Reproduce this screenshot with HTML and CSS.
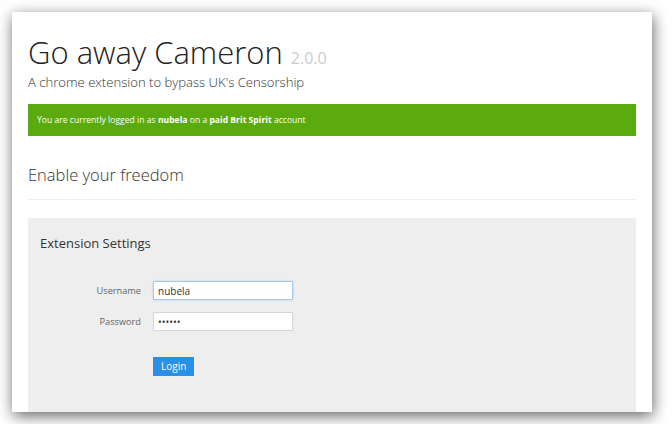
FILE: index.html
```html
<!DOCTYPE html>
<html lang="en">
<head>
    <meta charset="UTF-8">
    <title>Go away Cameron</title>
    <link rel="stylesheet" href="styles.css">
</head>
<body>
    <div class="window">
        <div class="page">
            <div class="head">
                <h1>Go away Cameron <small>2.0.0</small></h1>
                <p class="lead">A chrome extension to bypass UK's Censorship</p>
            </div>
            <div class="alert">You are currently logged in as <b>nubela</b> on a <b>paid Brit Spirit</b> account</div>
            <h2 class="section">Enable your freedom</h2>
            <div class="panel">
                <h3>Extension Settings</h3>
                <form class="form">
                    <label for="user">Username</label>
                    <input id="user" class="focus" type="text" value="nubela">
                    <label for="pass">Password</label>
                    <input id="pass" type="password" value="secret">
                    <span></span>
                    <div class="actions">
                        <button type="button" class="btn">Login</button>
                    </div>
                </form>
            </div>
        </div>
    </div>
</body>
</html>
```

FILE: styles.css
```css
* {
    margin: 0;
    padding: 0;
    box-sizing: border-box;
}

body {
    padding: 12px;
    background: #fff;
    font-family: "Open Sans", "Liberation Sans", sans-serif;
    color: #333;
}

.window {
    width: 640px;
    height: 400px;
    overflow: hidden;
    background: #fff;
    box-shadow: 1px 4px 14px rgba(0, 0, 0, .6);
}

.page {
    padding: 26px 16px 0;
}

h1 {
    font-size: 31px;
    line-height: 28px;
    font-weight: 300;
    color: #222;
}

h1 small {
    font-size: 16px;
    font-weight: 400;
    color: #ccc;
}

.lead {
    margin-top: 1px;
    font-size: 13.1px;
    line-height: 18px;
    font-weight: 300;
    color: #333;
}

.alert {
    margin-top: 13px;
    height: 32px;
    padding-left: 9px;
    background: #5baa0e;
    color: #fff;
    font-size: 8.6px;
    line-height: 32px;
}

.alert b {
    font-weight: 700;
}

.section {
    margin-top: 28px;
    padding-bottom: 13px;
    border-bottom: 1px solid #eee;
    font-size: 16.5px;
    line-height: 22px;
    font-weight: 300;
    color: #333;
}

.panel {
    margin-top: 18px;
    height: 300px;
    padding: 16px 12px 0;
    background: #eee;
}

.panel h3 {
    font-size: 13px;
    line-height: 18px;
    font-weight: 400;
    color: #333;
}

.form {
    display: grid;
    grid-template-columns: 101px 140px;
    column-gap: 12px;
    row-gap: 12px;
    align-items: center;
    margin-top: 29px;
}

.form label {
    text-align: right;
    font-size: 9.2px;
    color: #666;
}

.form input {
    height: 19px;
    padding: 0 4px;
    border: 1px solid #d6d6d6;
    background: #fff;
    font-family: inherit;
    font-size: 10px;
    color: #333;
    outline: none;
}

.form input.focus {
    border-color: #a9c9e9;
    box-shadow: 0 0 2px rgba(82, 150, 220, .35);
}

.actions {
    padding-top: 10px;
}

.btn {
    height: 19px;
    padding: 0 8px;
    border: 0;
    background: #2a8fe6;
    color: #fff;
    font-family: inherit;
    font-size: 10px;
    cursor: pointer;
}
```
